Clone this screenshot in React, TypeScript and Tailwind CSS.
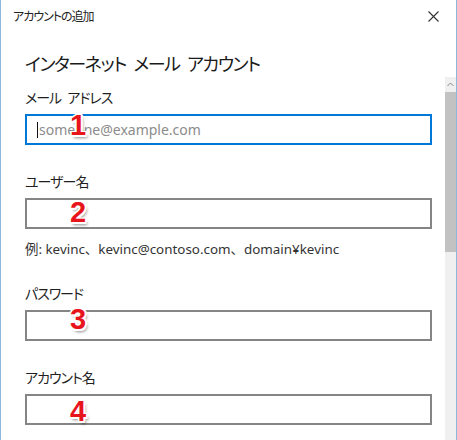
import React from 'react';

const JP = "font-['Noto_Sans_CJK_JP','Noto_Sans',sans-serif] [font-feature-settings:'palt']";

const redNumber =
  "absolute font-['Liberation_Sans',Arial,sans-serif] font-bold text-[29px] leading-none text-[#e8141c] [text-shadow:-1.5px_-1.5px_0_#fff,1.5px_-1.5px_0_#fff,-1.5px_1.5px_0_#fff,1.5px_1.5px_0_#fff,0_2px_0_#fff,2px_0_0_#fff,2px_3px_3px_rgba(0,0,0,0.45)]";

function Field({
  label,
  num,
  numTop,
  focused,
  placeholder,
  className,
}: {
  label: string;
  num: string;
  numTop: string;
  focused?: boolean;
  placeholder?: string;
  className?: string;
}) {
  return (
    <div className={className}>
      <div className="text-[14px] leading-[20px] text-[#1f1f1f] tracking-[-1px] [word-spacing:4px]">{label}</div>
      <div
        className={`relative mt-[7px] h-[31px] w-[407px] border-2 ${
          focused ? 'border-[#0078d7]' : 'border-[#858585]'
        } flex items-center pl-[10px]`}
      >
        {focused && <span className="h-[16px] w-[1px] bg-[#111]" />}
        {placeholder && (
          <span className="ml-[1px] text-[14px] text-[#8c8c8c] font-['Noto_Sans',sans-serif]">
            {placeholder}
          </span>
        )}
        <span className={`${redNumber} ${numTop} left-[43px]`}>{num}</span>
      </div>
    </div>
  );
}

export default function App() {
  return (
    <div className={`${JP} w-[457px] h-[440px] bg-white border-x border-[#8fb6dc] flex flex-col overflow-hidden`}>
      <div className="h-[32px] flex items-center justify-between pl-[12px] pr-[17px]">
        <span className="text-[12px] leading-[16px] text-[#222] tracking-[-1px]">アカウントの追加</span>
        <svg width="11" height="11" viewBox="0 0 11 11" className="text-[#333]">
          <path d="M0.5 0.5L10.5 10.5M10.5 0.5L0.5 10.5" stroke="currentColor" strokeWidth="1.1" />
        </svg>
      </div>
      <div className="flex flex-1">
        <div className="flex-1 pl-[24px] pt-[17px]">
          <div className="text-[18px] leading-[28px] text-[#1a1a1a] tracking-[-1.4px] [word-spacing:5px]">
            インターネット メール アカウント
          </div>
          <Field
            className="mt-[10px]"
            label="メール アドレス"
            num="1"
            numTop="top-[-5px]"
            focused
            placeholder="someone@example.com"
          />
          <Field className="mt-[26px]" label="ユーザー名" num="2" numTop="top-[-2px]" />
          <div className="mt-[10px] text-[13.4px] leading-[20px] text-[#333] [font-feature-settings:normal] font-['Noto_Sans','Noto_Sans_CJK_JP',sans-serif]">
            例: kevinc、kevinc@contoso.com、domain¥kevinc
          </div>
          <Field className="mt-[24px]" label="パスワード" num="3" numTop="top-[-7px]" />
          <Field className="mt-[26px]" label="アカウント名" num="4" numTop="top-[1px]" />
        </div>
        <div className="w-[11px] mt-[45px] bg-[#f0f0f0] flex flex-col">
          <div className="h-[15px] flex items-center justify-center">
            <svg width="7" height="5" viewBox="0 0 7 5">
              <path d="M0.5 4L3.5 1L6.5 4" stroke="#8a8a8a" strokeWidth="1" fill="none" />
            </svg>
          </div>
          <div className="h-[160px] bg-[#c2c2c2]" />
        </div>
      </div>
    </div>
  );
}
